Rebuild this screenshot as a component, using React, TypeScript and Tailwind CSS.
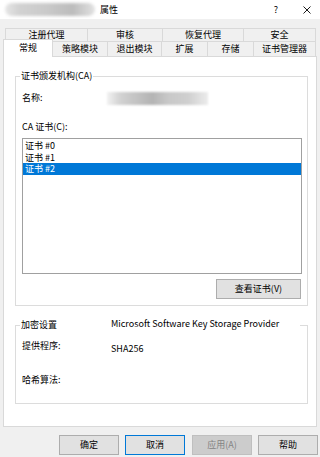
export default function App() {
  const row1 = [
    { label: "注册代理", w: "w-[82px]" },
    { label: "审核", w: "w-[75px]" },
    { label: "恢复代理", w: "w-[81px]" },
    { label: "安全", w: "w-[73px]" },
  ];
  const row2 = [
    { label: "策略模块", w: "w-[54px]" },
    { label: "退出模块", w: "w-[54px]" },
    { label: "扩展", w: "w-[46px]" },
    { label: "存储", w: "w-[46px]" },
    { label: "证书管理器", w: "w-[63px]" },
  ];
  const certs = ["证书 #0", "证书 #1", "证书 #2"];

  return (
    <div className="w-[320px] h-[457px] bg-[#f0f0f0] flex flex-col text-[9px] leading-[12px] text-black font-['Noto_Sans_CJK_SC','Noto_Sans',sans-serif] overflow-hidden">
      {/* title bar */}
      <div className="h-[19px] bg-white flex items-center shrink-0">
        <div className="ml-[5px] w-[90px] h-[13px] rounded-full bg-[linear-gradient(90deg,#e6e6e6,#d2d2d2_15%,#cacaca_45%,#bcbcbc_75%,#e2e2e2)] blur-[1.5px]" />
        <span className="ml-[5px]">属性</span>
        <span className="ml-auto mr-[25px]">?</span>
        <svg width="8" height="8" viewBox="0 0 8 8" className="mr-[9px]">
          <path d="M0.5 0.5 L7.5 7.5 M7.5 0.5 L0.5 7.5" stroke="#000" strokeWidth="0.9" />
        </svg>
      </div>

      {/* tabs */}
      <div className="mt-[9px] flex ml-[5px] h-[13px]">
        {row1.map((t, i) => (
          <div
            key={t.label}
            className={`${t.w} border-t border-l ${i === row1.length - 1 ? "border-r" : ""} border-[#d9d9d9] flex items-center justify-center`}
          >
            {t.label}
          </div>
        ))}
      </div>
      <div className="flex ml-[3px] h-[15px] items-end">
        <div className="w-[50px] h-[18px] -mb-[1px] relative z-10 bg-white border-t border-x border-[#d9d9d9] flex items-center justify-center pb-[1px]">
          常规
        </div>
        {row2.map((t, i) => (
          <div
            key={t.label}
            className={`${t.w} h-[15px] border-t ${i === 0 ? "" : "border-l"} ${i === row2.length - 1 ? "border-r" : ""} border-[#d9d9d9] flex items-center justify-center`}
          >
            {t.label}
          </div>
        ))}
      </div>

      {/* panel */}
      <div className="mx-[3px] h-[371px] bg-white border border-[#d9d9d9] flex flex-col pl-[11px] pr-[8px] shrink-0">
        <fieldset className="mt-[13px] border border-[#dcdcdc] px-0 pb-[6px]">
          <legend className="ml-[4px] px-[1px]">证书颁发机构(CA)</legend>
          <div className="flex flex-col pl-[6px] pr-[5px]">
            <div className="mt-[10px] flex items-center h-[12px]">
              <span className="w-[85px]">名称:</span>
              <div className="w-[101px] h-[13px] bg-[linear-gradient(90deg,#f2f2f2,#d4d4d4_12%,#c2c2c2_30%,#b4b4b4_45%,#c8c8c8_60%,#cfcfcf_80%,#ececec)] blur-[1px]" />
            </div>
            <div className="mt-[17px]">CA 证书(C):</div>
            <div className="mt-[5px] h-[136px] border border-[#a0a0a0] pt-[1px] flex flex-col">
              {certs.map((c, i) => (
                <div
                  key={c}
                  className={`h-[11.5px] leading-[11.5px] pl-[2px] ${i === 2 ? "bg-[#0078d7] text-white" : ""}`}
                >
                  {c}
                </div>
              ))}
            </div>
            <button className="mt-[5px] self-end mr-[1px] w-[85px] h-[20px] bg-[#e1e1e1] border border-[#adadad] flex items-center justify-center">
              查看证书(V)
            </button>
          </div>
        </fieldset>

        <fieldset className="mt-[13px] border border-[#dcdcdc] px-0 pb-[17px]">
          <legend className="ml-[4px] px-[1px] w-[280px] bg-white flex">
            <span className="w-[90px]">加密设置</span>
            <span className="-mt-[1px]">Microsoft Software Key Storage Provider</span>
          </legend>
          <div className="flex flex-col pl-[6px] pr-[5px]">
            <div className="mt-[9px] flex items-start">
              <span className="w-[89px]">提供程序:</span>
              <span className="mt-[3px]">SHA256</span>
            </div>
            <div className="mt-[19px]">哈希算法:</div>
          </div>
        </fieldset>
      </div>

      {/* buttons */}
      <div className="mt-[8px] flex">
        <button className="ml-[59px] w-[60px] h-[20px] bg-[#e1e1e1] border border-[#adadad] flex items-center justify-center">
          确定
        </button>
        <button className="ml-[6px] w-[60px] h-[20px] bg-[#e1e1e1] border border-[#0078d7] flex items-center justify-center">
          取消
        </button>
        <button className="ml-[7px] w-[60px] h-[20px] bg-[#cccccc] border border-[#bfbfbf] text-[#838383] flex items-center justify-center">
          应用(A)
        </button>
        <button className="ml-[6px] w-[60px] h-[20px] bg-[#e1e1e1] border border-[#adadad] flex items-center justify-center">
          帮助
        </button>
      </div>
    </div>
  );
}
